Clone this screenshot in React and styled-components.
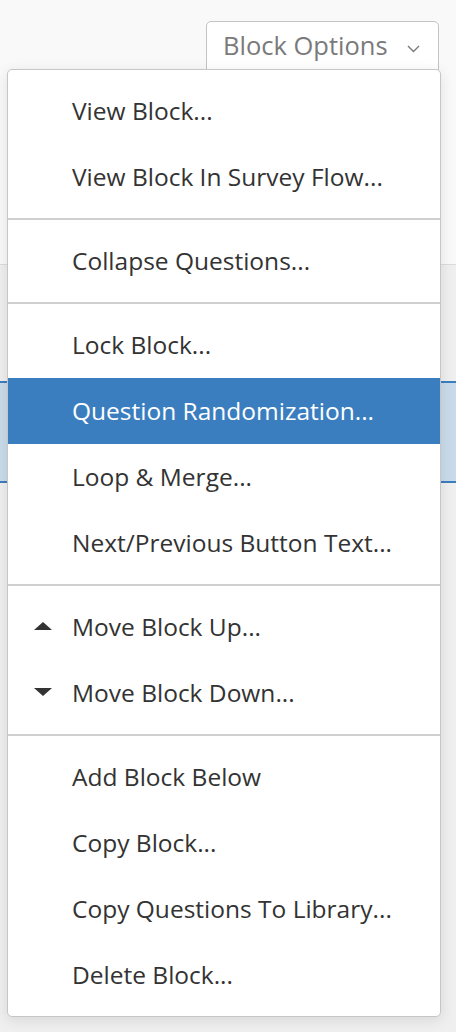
import React from 'react';
import styled, { createGlobalStyle } from 'styled-components';

const GlobalStyle = createGlobalStyle`
  html, body {
    margin: 0;
    padding: 0;
    background: #efefef;
    font-family: "Open Sans", "Noto Sans", Arial, sans-serif;
  }
`;

const Page = styled.div`
  position: relative;
  width: 456px;
  height: 1032px;
  overflow: hidden;
  display: flex;
  flex-direction: column;
`;

const Header = styled.div`
  height: 265px;
  background: #f9f9f9;
  border-bottom: 1px solid #dcdcdc;
  display: flex;
  justify-content: flex-end;
  align-items: flex-start;
  padding: 21px 17px 0 0;
  box-sizing: border-box;
`;

const OptionsButton = styled.button`
  width: 233px;
  height: 56px;
  box-sizing: border-box;
  background: #fff;
  border: 1.5px solid #c4c4c4;
  border-radius: 5px;
  display: flex;
  align-items: flex-start;
  padding: 6px 0 0 16px;
  gap: 19px;
  font-family: inherit;
  font-size: 25.5px;
  color: #7a7a7a;
  cursor: pointer;
  white-space: nowrap;
  svg {
    margin-top: 17px;
  }
`;

const Gap = styled.div`
  height: ${(p) => p.h}px;
`;

const SelectedBlock = styled.div`
  height: 98px;
  background: #c9dbea;
  border-top: 2px solid #3b7dbf;
  border-bottom: 2px solid #3b7dbf;
`;

const Menu = styled.div`
  position: absolute;
  top: 69px;
  left: 7px;
  width: 434px;
  box-sizing: border-box;
  background: #fff;
  border: 1px solid #c6c6c6;
  border-radius: 5px;
  box-shadow: 0 3px 14px rgba(0, 0, 0, 0.1);
`;

const Group = styled.div`
  padding: 8px 0;
  & + & {
    border-top: 2px solid #d0d0d0;
  }
`;

const Item = styled.div`
  position: relative;
  height: 66px;
  display: flex;
  align-items: center;
  padding-left: 64px;
  padding-bottom: 2px;
  box-sizing: border-box;
  font-size: 24.5px;
  white-space: nowrap;
  color: ${(p) => (p.active ? '#fff' : '#333')};
  background: ${(p) => (p.active ? '#3a7ebf' : 'transparent')};
`;

const Caret = styled.svg`
  position: absolute;
  left: 26px;
  top: 50%;
  margin-top: -5px;
`;

const groups = [
  ['View Block...', 'View Block In Survey Flow...'],
  ['Collapse Questions...'],
  ['Lock Block...', 'Question Randomization...', 'Loop & Merge...', 'Next/Previous Button Text...'],
  ['Move Block Up...', 'Move Block Down...'],
  ['Add Block Below', 'Copy Block...', 'Copy Questions To Library...', 'Delete Block...'],
];

function Arrow({ up }) {
  return (
    <Caret width="18" height="8" viewBox="0 0 18 8">
      <path d={up ? 'M9 0 L18 8 L0 8 Z' : 'M0 0 L18 0 L9 8 Z'} fill="#333" />
    </Caret>
  );
}

function App() {
  return (
    <Page>
      <GlobalStyle />
      <Header>
        <OptionsButton>
          Block Options
          <svg width="13" height="8" viewBox="0 0 13 8">
            <path d="M1 1 L6.5 6.5 L12 1" fill="none" stroke="#7a7a7a" strokeWidth="1.4" />
          </svg>
        </OptionsButton>
      </Header>
      <Gap h={116} />
      <SelectedBlock />
      <Menu>
        {groups.map((items, gi) => (
          <Group key={gi}>
            {items.map((label) => (
              <Item key={label} active={label === 'Question Randomization...'}>
                {label === 'Move Block Up...' && <Arrow up />}
                {label === 'Move Block Down...' && <Arrow />}
                {label}
              </Item>
            ))}
          </Group>
        ))}
      </Menu>
    </Page>
  );
}

export default App;
